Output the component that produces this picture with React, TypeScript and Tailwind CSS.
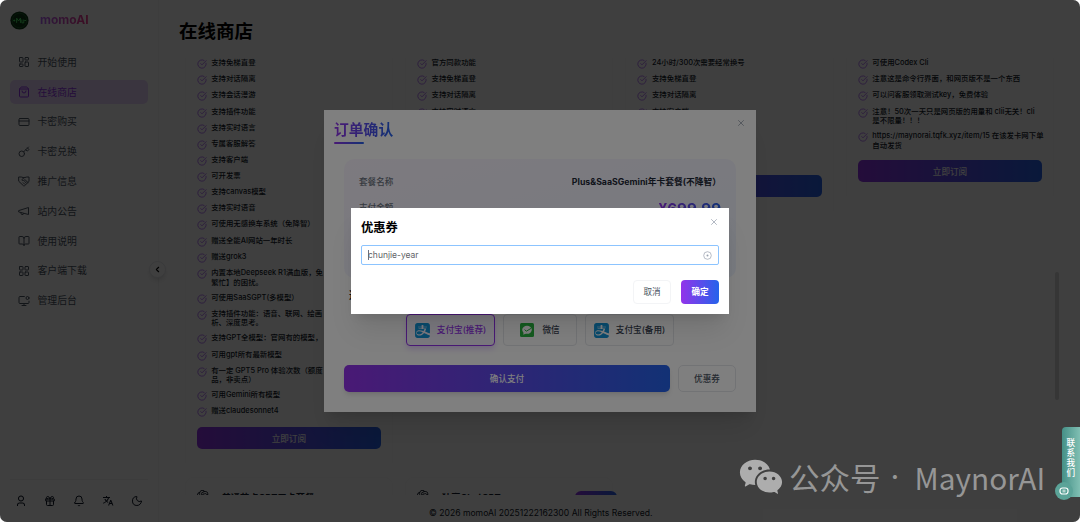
import {
  Bell, BookOpen, ChevronLeft, CircleCheckBig, CreditCard, Gift, Key, LayoutDashboard,
  LayoutGrid, MonitorDot, Moon, ShoppingBag, X,
} from 'lucide-react';
import { RiTranslate2, RiUser3Line, RiWechatFill } from 'react-icons/ri';
import { SiAlipay, SiOpenai } from 'react-icons/si';

interface IconProps {
  className?: string;
}

function HandshakeIcon({ className }: IconProps) {
  return (
    <svg viewBox="0 0 24 24" className={className} fill="none" stroke="currentColor" strokeWidth="2" strokeLinecap="round" strokeLinejoin="round">
      <path d="M2 4h4.500l5.500 1.500L17.500 4H22v9l-9 8.500a1.500 1.500 0 0 1-2 0L2 13z" />
      <path d="M12 5.500L7.500 9.500c1 2 3.500 2 5 .5h2l5.500 5" />
      <path d="M10.500 15.500l3 3M13.500 13l3 3" />
    </svg>
  );
}

function MegaphoneIcon({ className }: IconProps) {
  return (
    <svg viewBox="0 0 24 24" className={className} fill="none" stroke="currentColor" strokeWidth="2" strokeLinecap="round" strokeLinejoin="round">
      <path d="m2 11 19-6v14L2 14z" />
      <path d="M11.600 17a3 3 0 1 1-5.800-1.600" />
    </svg>
  );
}

const navItems = [
  { icon: LayoutDashboard, label: '开始使用' },
  { icon: ShoppingBag, label: '在线商店', active: true },
  { icon: CreditCard, label: '卡密购买' },
  { icon: Key, label: '卡密兑换' },
  { icon: HandshakeIcon, label: '推广信息' },
  { icon: MegaphoneIcon, label: '站内公告' },
  { icon: BookOpen, label: '使用说明' },
  { icon: LayoutGrid, label: '客户端下载' },
  { icon: MonitorDot, label: '管理后台' },
];

const footerIcons = [RiUser3Line, Gift, Bell, RiTranslate2, Moon];

const plans = [
  [
    '支持免梯直登', '支持对话隔离', '支持会话漫游', '支持插件功能', '支持实时语言', '专属客服解答',
    '支持客户端', '可开发票', '支持canvas模型', '支持实时语音', '可使用无感换车系统（免降智）',
    '赠送全能AI网站一年时长', '赠送grok3', '内置本地Deepseek R1满血版，免\n繁忙】的困扰。',
    '可使用SaaSGPT(多模型）', '支持插件功能：语音、联网、绘画\n析、深度思考。', '支持GPT全模型：官网有的模型，',
    '可用gpt所有最新模型', '有一定 GPT5 Pro 体验次数（额度\n品，非卖点）', '可用Gemini所有模型', '赠送claudesonnet4',
  ],
  ['官方同款功能', '支持免梯直登', '支持对话隔离', '支持实时语言'],
  ['24小时/300次需要经常换号', '支持免梯直登', '支持对话隔离', '支持客户端', '可开发票', '支持实时语音', '专属客服解答'],
  [
    '可使用Codex Cli', '注意这是命令行界面，和网页版不是一个东西', '可以问客服领取测试key，免费体验',
    '注意！50次一天只是网页版的用量和 clii无关！cli\n是不限量！！！',
    'https://maynorai.tqfk.xyz/item/15 在该发卡网下单\n自动发货',
  ],
];

function Sidebar() {
  return (
    <aside className="relative flex h-full w-[159px] shrink-0 flex-col border-r border-[#f4f4f4] px-[10px]">
      <div className="flex h-10 items-center gap-[11px]">
        <svg viewBox="0 0 20 20" className="h-[19px] w-[19px]">
          <circle cx="10" cy="10" r="9.600" fill="#0c3a16" />
          <circle cx="10" cy="10" r="7.600" fill="none" stroke="#1b5c28" />
          <path d="M3.500 10h2M4.500 9v2M7 12.500V7.500l2 3 2-3v5M12.500 9v3.500h2V9M15 10h2" fill="none" stroke="#4fe868" strokeWidth="1" />
        </svg>
        <span className="bg-linear-to-r/srgb from-[#b565fa] to-[#f0368a] bg-clip-text text-[12px] leading-4 font-bold text-transparent">momoAI</span>
      </div>
      <nav className="mt-[10px] flex flex-col gap-[5.200px]">
        {navItems.map(({ icon: Icon, label, active }) => (
          <a
            key={label}
            className={`flex h-[24.600px] items-center gap-[7.500px] rounded-[5px] px-[8px] text-[9.850px] ${
              active ? 'bg-[#ead6ff] text-[#9333ea]' : 'text-[#4b5563]'
            }`}
          >
            <Icon className="h-3 w-3" />
            <span>{label}</span>
          </a>
        ))}
      </nav>
      <div className="mt-auto flex h-[43px] items-center justify-between border-t border-[#f0f0f0] px-[5px]">
        {footerIcons.map((Icon, i) => (
          <Icon key={i} className="h-3 w-3 text-gray-900" />
        ))}
      </div>
      <button className="absolute top-[261px] -right-[8px] flex h-[17px] w-[17px] items-center justify-center rounded-full border border-gray-200 bg-white shadow-md">
        <ChevronLeft className="h-[9px] w-[9px]" strokeWidth={3} />
      </button>
    </aside>
  );
}

function PlanCard({ features }: { features: string[] }) {
  return (
    <div className="w-[208.300px] shrink-0 self-start border-x border-[#fafafa] px-[11px] pb-[14px]">
      <ul className="flex flex-col gap-[5.140px]">
        {features.map((feature, i) => (
          <li key={i} className="flex min-h-[11px] items-start gap-[4.500px]">
            <CircleCheckBig className="mt-px h-[10px] w-[10px] shrink-0 text-[#a862f2]" />
            <span className="text-[7.400px] leading-[9.800px] font-medium whitespace-pre text-gray-900">{feature}</span>
          </li>
        ))}
      </ul>
      <button className="mt-[9.500px] flex h-[22px] w-full items-center justify-center rounded-[5px] bg-linear-to-r/srgb from-[#9333ea] to-[#2563eb] pt-[2px] text-[8.600px] font-medium text-white">
        立即订阅
      </button>
    </div>
  );
}

function NextPlan({ name }: { name: string }) {
  return (
    <div className="flex h-[50px] w-[208.300px] shrink-0 gap-[13px] rounded-t-lg border border-[#fafafa] px-[11px] pt-[12px]">
      <SiOpenai className="h-3 w-3 text-gray-900" />
      <span className="text-[9.200px] leading-[15px] font-bold text-gray-900">{name}</span>
    </div>
  );
}

function Shop() {
  return (
    <main className="flex h-full flex-1 flex-col">
      <h1 className="mt-[18px] pl-[20px] text-[18.500px] leading-[26px] font-bold text-black">在线商店</h1>
      <div className="mt-[14px] h-[437px] overflow-hidden pl-[25.700px]">
        <div className="flex h-[419px] gap-[12.100px] pt-[0.200px]">
          {plans.map((features, i) => (
            <PlanCard key={i} features={features} />
          ))}
        </div>
        <div className="relative flex gap-[12.100px]">
          <NextPlan name="普通节点GPT天卡套餐" />
          <NextPlan name="独享ChatGPT" />
          <div className="absolute top-[14px] left-[390px] h-4 w-[42px] rounded-md bg-linear-to-r/srgb from-[#9333ea] to-[#2563eb]" />
        </div>
      </div>
      <footer className="flex flex-1 items-center pt-[10px] pl-[270px] text-[8.600px] text-gray-900">
        © 2026 momoAI 20251222162300 All Rights Reserved.
      </footer>
    </main>
  );
}

function WechatPay() {
  return (
    <svg viewBox="0 0 14 14" className="h-[14px] w-[14px]">
      <rect width="14" height="14" rx="1.500" fill="#2bb741" />
      <ellipse cx="7" cy="6.800" rx="4.800" ry="4" fill="#fff" />
      <path d="M3.500 9.500L3.300 11.800L6 10.500z" fill="#fff" />
      <path d="M4.600 6.600L6.300 8.200L11.200 5.300" fill="none" stroke="#2bb741" strokeWidth="1" />
    </svg>
  );
}

function OrderModal() {
  return (
    <div className="flex h-[302px] w-[432px] flex-col bg-white px-[10px] shadow-xl">
      <div className="flex items-start justify-between">
        <div className="mt-[10px] flex flex-col items-start">
          <h2 className="bg-linear-to-r/srgb from-[#9333ea] to-[#2563eb] bg-clip-text text-[14.800px] leading-[20px] font-bold text-transparent">
            订单确认
          </h2>
          <div className="mt-[2px] h-[2px] w-[30px] rounded bg-linear-to-r/srgb from-[#9333ea] to-[#2563eb]" />
        </div>
        <X className="mt-[8px] h-[10px] w-[10px] text-gray-400" strokeWidth={2} />
      </div>
      <div className="mx-[10px] mt-[15px] flex h-[119px] flex-col gap-[11px] rounded-[10px] bg-linear-to-br/srgb from-[#faf5ff] to-[#eff4ff] px-[15px] pt-[15.500px] text-[8.600px] leading-[15px]">
        <div className="flex h-[15px] items-center justify-between">
          <span className="font-medium text-[#6b7280]">套餐名称</span>
          <span className="text-[8.750px] font-bold text-[#1f2937]">Plus&amp;SaaSGemini年卡套餐(不降智）</span>
        </div>
        <div className="flex h-[15px] items-center justify-between">
          <span className="font-medium text-[#6b7280]">支付金额</span>
          <span className="bg-linear-to-r/srgb from-[#9333ea] to-[#2563eb] bg-clip-text text-[15.200px] leading-[19px] font-bold text-transparent">¥699.99</span>
        </div>
      </div>
      <h3 className="mt-[10px] pl-[15px] text-[9.850px] leading-[15px] font-bold text-gray-900">选择支付方式</h3>
      <div className="mt-[11px] flex justify-center gap-[8px] text-[8.600px] font-medium text-[#374151]">
        <button className="flex h-[32px] w-[89px] items-center justify-center gap-[7px] rounded-[4px] border border-[#9333ea] bg-[#f7f2ff] text-[#9333ea] shadow-md shadow-purple-200">
          <SiAlipay className="h-[15px] w-[15px] text-[#1296db]" />
          支付宝(推荐)
        </button>
        <button className="flex h-[32px] w-[74px] items-center justify-center gap-[8px] rounded-[4px] border border-gray-200">
          <WechatPay />
          微信
        </button>
        <button className="flex h-[32px] w-[89px] items-center justify-center gap-[7px] rounded-[4px] border border-gray-200">
          <SiAlipay className="h-[15px] w-[15px] text-[#1296db]" />
          支付宝(备用)
        </button>
      </div>
      <div className="mx-[10px] mt-[19px] flex gap-[8px] text-[8.600px] font-medium">
        <button className="h-[27px] flex-1 rounded-[5px] bg-linear-to-r/srgb from-[#9333ea] to-[#2563eb] pt-[2px] text-white shadow-md">确认支付</button>
        <button className="h-[27px] w-[58px] rounded-[5px] border border-gray-200 pt-[2px] text-[#4b5563]">优惠券</button>
      </div>
    </div>
  );
}

function CouponDialog() {
  return (
    <div className="flex h-[106px] w-[378px] flex-col bg-white px-[10px] shadow-xl">
      <div className="flex items-start justify-between">
        <h2 className="mt-[11px] text-[12.300px] leading-[17px] font-bold text-black">优惠券</h2>
        <X className="mt-[9px] h-[10px] w-[10px] text-gray-400" strokeWidth={1.800} />
      </div>
      <div className="mt-[9px] flex h-[20px] items-center rounded-[2px] border border-[#8cc4ff] pr-[6px] pl-[6px]">
        <div className="h-[10px] w-px bg-gray-500" />
        <span className="-ml-px flex-1 text-[8.500px] text-[#606266]">chunjie-year</span>
        <svg viewBox="0 0 9 9" className="h-[9px] w-[9px] text-gray-400">
          <circle cx="4.500" cy="4.500" r="3.800" fill="none" stroke="currentColor" strokeWidth=".7" />
          <circle cx="4.500" cy="4.500" r="1" fill="currentColor" />
        </svg>
      </div>
      <div className="mt-[15px] flex justify-end gap-[10px] text-[8.600px]">
        <button className="h-[24px] w-[38px] rounded-[4px] border border-gray-100 text-[#4b5563]">取消</button>
        <button className="h-[24px] w-[38px] rounded-[4px] bg-linear-to-r/srgb from-[#9333ea] to-[#2563eb] font-bold text-white">确定</button>
      </div>
    </div>
  );
}

function ContactTab() {
  return (
    <div className="absolute top-[427px] right-0 flex h-[70px] w-[18.500px] justify-center rounded-l-[4px] bg-linear-to-r/srgb from-[#459087] to-[#80bfb3] pt-[11px]">
      <div className="flex flex-col items-center text-[8.600px] leading-[10px] font-medium text-white">
        {['联', '系', '我', '们'].map((char) => (
          <span key={char}>{char}</span>
        ))}
      </div>
      <div className="absolute top-[55px] -left-[6.500px] flex h-[18px] w-[18px] items-center justify-center rounded-full bg-[#5ba398]">
        <svg viewBox="0 0 10 8" className="h-[8px] w-[10px]">
          <rect x="1" y="1" width="8" height="6" rx="2.500" fill="none" stroke="#fff" strokeWidth="1.200" />
          <path d="M3.500 3.200h3M3.500 4.800h3" stroke="#fff" strokeWidth=".8" />
        </svg>
      </div>
    </div>
  );
}

export default function App() {
  return (
    <div className="h-[522px] w-[1080px] bg-white">
      <div className="relative h-[522px] w-[1080px] overflow-hidden rounded-[7px] bg-white font-['Inter','Noto_Sans_CJK_SC',sans-serif]">
        <div className="flex h-full">
          <Sidebar />
          <Shop />
        </div>
        <div className="absolute top-[272px] right-[21px] h-[128px] w-[4px] rounded-full bg-[#d8d8da]" />

        {/* Order modal */}
        <div className="absolute inset-0 flex items-start justify-center bg-black/50 pt-[110px]">
          <OrderModal />
        </div>

        {/* Coupon dialog */}
        <div className="absolute inset-0 flex items-start justify-center bg-black/50 pt-[208px]">
          <CouponDialog />
        </div>

        <div className="absolute top-[455px] left-[738px] flex h-[44px] items-center font-['Noto_Sans_CJK_SC',sans-serif] text-[30.500px] leading-[44px] text-[#969696]">
          <RiWechatFill className="h-[46px] w-[46px] text-[#adadad]" />
          <span className="ml-[5px]">公众号</span>
          <span className="w-[34px] pl-[10px] font-['Inter',sans-serif]">·</span>
          <span className="text-[29.800px]">MaynorAI</span>
        </div>
        <ContactTab />
      </div>
    </div>
  );
}
